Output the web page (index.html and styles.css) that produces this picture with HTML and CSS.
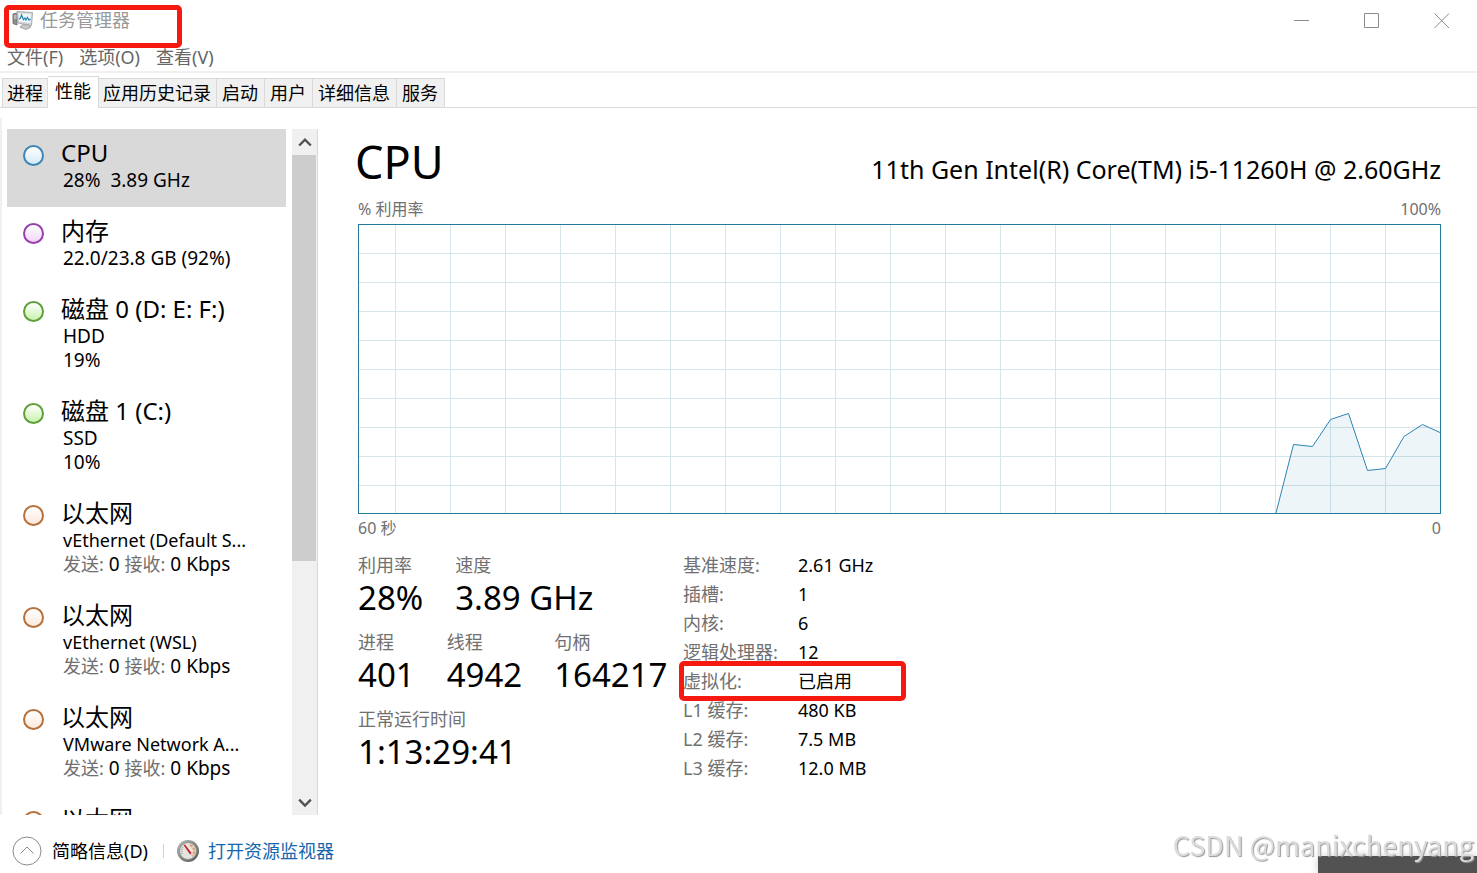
FILE: index.html
```html
<!DOCTYPE html>
<html lang="zh-CN">
<head>
  <meta charset="UTF-8">
  <meta name="viewport" content="width=device-width, initial-scale=1.0">
  <link rel="stylesheet" href="styles.css">
  <title>任务管理器</title>
</head>
<body>

<header class="titlebar">
  <svg class="app-icon" viewBox="0 0 22 20">
    <path d="M1 4 L5 3 V15 L1 13.500 Z" fill="#8d8d8d" stroke="#777"/>
    <path d="M2 6 H4.500 M2 8 H4.500" stroke="#e8e8e8"/>
    <path d="M5 1.500 L20.500 2.500 L19.500 15.500 L6 13 Z" fill="#d3d6d8" stroke="#a9adb0"/>
    <path d="M6.500 3.500 L19 4 L18.500 13 L7 11.500 Z" fill="#eef7fb"/>
    <path d="M7 9 L8.500 8 L9.500 5 L11.500 9.500 L13 8 L14 10 L15.500 7.500 L17 10 L18.500 9" fill="none" stroke="#2f87b5" stroke-width="1.300"/>
    <path d="M11 14.500 L16 15 L19 17 L14 19.500 L8 17 Z" fill="#c9c9c9" stroke="#a2a2a2"/>
  </svg>
  <h1 class="app-name">任务管理器</h1>
  <div class="window-buttons">
    <button aria-label="最小化"><svg viewBox="0 0 16 16"><path d="M0 8.500 H15"/></svg></button>
    <button aria-label="最大化"><svg viewBox="0 0 16 16"><path d="M.5 1.500 H14.500 V15.500 H.5 Z"/></svg></button>
    <button aria-label="关闭"><svg viewBox="0 0 16 16"><path d="M.5 1.500 L15 16 M15 1.500 L.5 16"/></svg></button>
  </div>
  <span class="mark mark-title"></span>
</header>

<nav class="menu">
  <button>文件(F)</button>
  <button>选项(O)</button>
  <button>查看(V)</button>
</nav>

<div class="tabs" role="tablist">
  <button class="tab" role="tab">进程</button>
  <button class="tab active" role="tab" aria-selected="true">性能</button>
  <button class="tab" role="tab">应用历史记录</button>
  <button class="tab" role="tab">启动</button>
  <button class="tab" role="tab">用户</button>
  <button class="tab" role="tab">详细信息</button>
  <button class="tab" role="tab">服务</button>
</div>

<main class="content">
  <div class="sidebar">
    <ul class="devices">
      <li class="device cpu selected">
        <span class="dot"></span>
        <div>
          <h2>CPU</h2>
          <p class="value">28%&nbsp; 3.89 GHz</p>
        </div>
      </li>
      <li class="device memory">
        <span class="dot"></span>
        <div>
          <h2>内存</h2>
          <p class="value">22.0/23.8 GB (92%)</p>
        </div>
      </li>
      <li class="device disk">
        <span class="dot"></span>
        <div>
          <h2>磁盘 0 (D: E: F:)</h2>
          <p class="value">HDD</p>
          <p class="value">19%</p>
        </div>
      </li>
      <li class="device disk">
        <span class="dot"></span>
        <div>
          <h2>磁盘 1 (C:)</h2>
          <p class="value">SSD</p>
          <p class="value">10%</p>
        </div>
      </li>
      <li class="device net">
        <span class="dot"></span>
        <div>
          <h2>以太网</h2>
          <p>vEthernet (Default S...</p>
          <p class="value"><i>发送:</i> 0 <i>接收:</i> 0 Kbps</p>
        </div>
      </li>
      <li class="device net">
        <span class="dot"></span>
        <div>
          <h2>以太网</h2>
          <p>vEthernet (WSL)</p>
          <p class="value"><i>发送:</i> 0 <i>接收:</i> 0 Kbps</p>
        </div>
      </li>
      <li class="device net">
        <span class="dot"></span>
        <div>
          <h2>以太网</h2>
          <p>VMware Network A...</p>
          <p class="value"><i>发送:</i> 0 <i>接收:</i> 0 Kbps</p>
        </div>
      </li>
      <li class="device net">
        <span class="dot"></span>
        <div>
          <h2>以太网</h2>
        </div>
      </li>
    </ul>
    <div class="scrollbar">
      <button aria-label="向上滚动"><svg viewBox="0 0 12 10"><path d="M1 8 L6 3 L11 8"/></svg></button>
      <div class="track"><div class="thumb"></div></div>
      <button aria-label="向下滚动"><svg viewBox="0 0 12 10"><path d="M1 3 L6 8 L11 3"/></svg></button>
    </div>
  </div>

  <section class="panel">
    <div class="panel-head">
      <h2>CPU</h2>
      <span class="model">11th Gen Intel(R) Core(TM) i5-11260H @ 2.60GHz</span>
    </div>
    <div class="axis axis-top"><span>% 利用率</span><span>100%</span></div>
    <svg class="chart" viewBox="0 0 1081 288" preserveAspectRatio="none">
      <path class="grid" d="M36.500 0V288M91.500 0V288M146.500 0V288M201.500 0V288M256.500 0V288M311.500 0V288M366.500 0V288M421.500 0V288M476.500 0V288M531.500 0V288M586.500 0V288M641.500 0V288M696.500 0V288M751.500 0V288M806.500 0V288M861.500 0V288M916.500 0V288M971.500 0V288M1026.500 0V288"/>
      <path class="grid" d="M0 28.500H1081M0 57.500H1081M0 86.500H1081M0 115.500H1081M0 144.500H1081M0 173.500H1081M0 202.500H1081M0 231.500H1081M0 260.500H1081"/>
      <path class="usage" d="M917 288 L934.500 219.500 L953.500 221.500 L971.500 194.500 L989.500 188.500 L1008.500 245.500 L1026.500 243.500 L1045 211.500 L1063.500 199.500 L1081 207.500 V288 Z"/>
      <path class="line" d="M917 288 L934.500 219.500 L953.500 221.500 L971.500 194.500 L989.500 188.500 L1008.500 245.500 L1026.500 243.500 L1045 211.500 L1063.500 199.500 L1081 207.500"/>
    </svg>
    <div class="axis axis-bottom"><span>60 秒</span><span>0</span></div>

    <div class="info">
      <div class="stats">
        <dl class="stat-row">
          <div><dt>利用率</dt><dd>28%</dd></div>
          <div><dt>速度</dt><dd>3.89 GHz</dd></div>
        </dl>
        <dl class="stat-row">
          <div><dt>进程</dt><dd>401</dd></div>
          <div><dt>线程</dt><dd>4942</dd></div>
          <div><dt>句柄</dt><dd>164217</dd></div>
        </dl>
        <dl class="stat-row">
          <div><dt>正常运行时间</dt><dd>1:13:29:41</dd></div>
        </dl>
      </div>
      <dl class="specs">
        <div><dt>基准速度:</dt><dd>2.61 GHz</dd></div>
        <div><dt>插槽:</dt><dd>1</dd></div>
        <div><dt>内核:</dt><dd>6</dd></div>
        <div><dt>逻辑处理器:</dt><dd>12</dd></div>
        <div><dt>虚拟化:</dt><dd>已启用</dd><span class="mark mark-spec"></span></div>
        <div><dt>L1 缓存:</dt><dd>480 KB</dd></div>
        <div><dt>L2 缓存:</dt><dd>7.5 MB</dd></div>
        <div><dt>L3 缓存:</dt><dd>12.0 MB</dd></div>
      </dl>
    </div>
  </section>
</main>

<footer class="footer">
  <button class="fewer">
    <svg viewBox="0 0 30 30"><circle cx="15" cy="15" r="14"/><path d="M8.500 17.500 L15 11 L21.500 17.500"/></svg>
    简略信息(D)
  </button>
  <span class="divider"></span>
  <a class="monitor" href="#">
    <svg viewBox="0 0 24 24">
      <defs>
        <linearGradient id="rim" x1="0" y1="0" x2="1" y2="1">
          <stop offset="0" stop-color="#b9bcba"/>
          <stop offset="1" stop-color="#4f5653"/>
        </linearGradient>
      </defs>
      <circle cx="12" cy="12" r="11" fill="url(#rim)"/>
      <circle cx="12" cy="12" r="8.500" fill="#e6e4df" stroke="#8f9490"/>
      <path d="M14 6 A6.500 6.500 0 0 1 16 17" fill="none" stroke="#e3a578" stroke-width="2.500" stroke-dasharray="3 1"/>
      <path d="M6.500 15 A6.500 6.500 0 0 1 7 8" fill="none" stroke="#aaa" stroke-width="1.500" stroke-dasharray="1 1"/>
      <path d="M7.500 6 L9 5.500 L15.500 14 L14 15.500 Z" fill="#c8202a"/>
    </svg>
    打开资源监视器
  </a>
</footer>

<div class="corner"></div>
<div class="watermark">CSDN @manixchenyang</div>

</body>
</html>
```
FILE: styles.css
```css
* {
  box-sizing: border-box;
}

body {
  display: flex;
  flex-direction: column;
  height: 100vh;
  margin: 0;
  font-family: 'Noto Sans', 'Noto Sans CJK SC', sans-serif;
  font-size: 18px;
  line-height: 24px;
  color: #000;
  background-color: #fff;
  overflow: hidden;
}

h1, h2, p, ul, dl, dd {
  margin: 0;
  padding: 0;
  font-weight: normal;
}

button {
  padding: 0;
  border: none;
  background: none;
  font: inherit;
  color: inherit;
}

/* Title bar */
.titlebar {
  position: relative;
  display: flex;
  align-items: center;
  height: 42px;
  padding: 0 0 2px 12px;
}

.app-icon {
  width: 22px;
  height: 20px;
}

.app-name {
  margin-left: 6px;
  font-size: 18px;
  color: #999;
}

.window-buttons {
  display: flex;
  margin-left: auto;
}

.window-buttons button {
  display: flex;
  align-items: center;
  justify-content: center;
  width: 70px;
  height: 40px;
}

.window-buttons svg {
  width: 16px;
  height: 16px;
  fill: none;
  stroke: #8c8c8c;
}

/* Red highlight frames */
.mark {
  position: absolute;
  border: 5px solid #f5190f;
  border-radius: 5px;
}

.mark-title {
  top: 5px;
  left: 4px;
  width: 178px;
  height: 43px;
}

.mark-spec {
  top: -8px;
  left: -4px;
  width: 227px;
  height: 40px;
}

/* Menu */
.menu {
  display: flex;
  gap: 16px;
  height: 31px;
  padding: 3px 7px;
  border-bottom: 2px solid #f0f0f0;
  color: #666;
}

/* Tabs */
.tabs {
  display: flex;
  align-items: flex-end;
  height: 35px;
  padding-left: 2px;
  border-bottom: 1px solid #d9d9d9;
}

.tab {
  height: 29px;
  padding: 0 6px 0 5px;
  border: 1px solid #d9d9d9;
  border-width: 1px 1px 0 0;
  background-color: #f0f0f0;
}

.tab:first-child {
  padding: 0 4px;
  border-left-width: 1px;
}

.tab:nth-child(3) {
  padding: 0 5px 0 4px;
}

.tab.active {
  height: 32px;
  margin-bottom: -1px;
  padding: 0 7px 3px;
  background-color: #fff;
}

.content {
  display: flex;
  flex: 1;
  min-height: 0;
}

/* Device list */
.sidebar {
  display: flex;
  gap: 6px;
  width: 318px;
  margin-top: 10px;
  padding: 11px 0 0 5px;
  border-left: 2px solid #f0f0f0;
}

.devices {
  flex: 1;
  list-style: none;
  overflow: hidden;
}

.device {
  display: flex;
  gap: 17px;
  padding: 8px 0 15px 16px;
}

.device.selected {
  background-color: #d9d9d9;
}

.device h2 {
  font-size: 24px;
  line-height: 31px;
  white-space: nowrap;
}

.device p {
  padding-left: 2px;
  white-space: nowrap;
}

.device .value {
  height: 24px;
  font-size: 19px;
}

.device i {
  font-size: 18px;
  font-style: normal;
  color: #707070;
}

.dot {
  flex: none;
  width: 21px;
  height: 21px;
  margin-top: 8px;
  border: 2px solid;
  border-radius: 50%;
}

.cpu .dot {
  border-color: #3a87b5;
  background: linear-gradient(#fff, #d5eaf7);
}

.memory .dot {
  border-color: #9540ab;
  background: linear-gradient(#fff, #f1d5f8);
}

.disk .dot {
  border-color: #5f9f3a;
  background: linear-gradient(#fff, #c9f2ae);
}

.net .dot {
  border-color: #b5703c;
  background: linear-gradient(#fff, #fbe9dc);
}

.scrollbar {
  display: flex;
  flex-direction: column;
  width: 26px;
  background-color: #f0f0f0;
  border-right: 1px solid #d9d9d9;
}

.scrollbar button {
  display: flex;
  align-items: center;
  justify-content: center;
  height: 26px;
}

.scrollbar svg {
  width: 14px;
  height: 12px;
  fill: none;
  stroke: #505050;
  stroke-width: 2;
}

.track {
  flex: 1;
}

.thumb {
  width: 24px;
  height: 64%;
  background-color: #cdcdcd;
}

/* Right panel */
.panel {
  flex: 1;
  padding: 22px 36px 0 40px;
}

.panel-head {
  display: flex;
  align-items: baseline;
  justify-content: space-between;
  height: 67px;
}

.panel-head h2 {
  margin-left: -3px;
  font-size: 45px;
  line-height: 64px;
}

.model {
  font-size: 25px;
}

.axis {
  display: flex;
  justify-content: space-between;
  font-size: 16px;
  color: #707070;
}

.axis-top {
  height: 27px;
}

.axis-bottom {
  height: 38px;
  padding-top: 2px;
}

.chart {
  display: block;
  width: 100%;
  height: 290px;
  border: 1px solid #2179a0;
}

.chart path {
  fill: none;
  vector-effect: non-scaling-stroke;
}

.chart .grid {
  stroke: #d6e5ea;
}

.chart .usage {
  fill: rgba(17, 115, 170, 0.07);
}

.chart .line {
  stroke: #2d84b3;
}

.info {
  display: flex;
}

.stats {
  width: 325px;
}

.stat-row {
  display: flex;
  gap: 32px;
  height: 77px;
}

.stats dt {
  line-height: 26px;
}

.stats dd {
  font-size: 33px;
  line-height: 40px;
  white-space: nowrap;
}

dt {
  color: #707070;
}

.specs {
  padding-top: 1px;
}

.specs > div {
  position: relative;
  display: flex;
  height: 29px;
}

.specs dt {
  width: 115px;
}

/* Footer */
.footer {
  display: flex;
  align-items: center;
  height: 58px;
  padding: 14px 12px 0;
}

.fewer,
.monitor {
  display: flex;
  align-items: center;
}

.fewer svg {
  width: 30px;
  height: 30px;
  margin-right: 10px;
  fill: none;
  stroke: #8a8a8a;
}

.divider {
  width: 1px;
  height: 14px;
  margin: 0 12px 0 15px;
  background-color: #d0d0d0;
}

.monitor {
  color: #1566ad;
  text-decoration: none;
}

.monitor svg {
  width: 24px;
  height: 24px;
  margin-right: 8px;
}

.corner {
  position: fixed;
  right: 0;
  bottom: 0;
  width: 159px;
  height: 17px;
  background-color: #525252;
  box-shadow: 0 0 8px rgba(0, 0, 0, 0.2);
}

.watermark {
  position: fixed;
  right: 3px;
  bottom: 10px;
  font-family: 'Noto Sans CJK SC', sans-serif;
  font-size: 27px;
  line-height: 36px;
  color: #dcdcdc;
  text-shadow: 1px 1px 1px #999;
}
```
